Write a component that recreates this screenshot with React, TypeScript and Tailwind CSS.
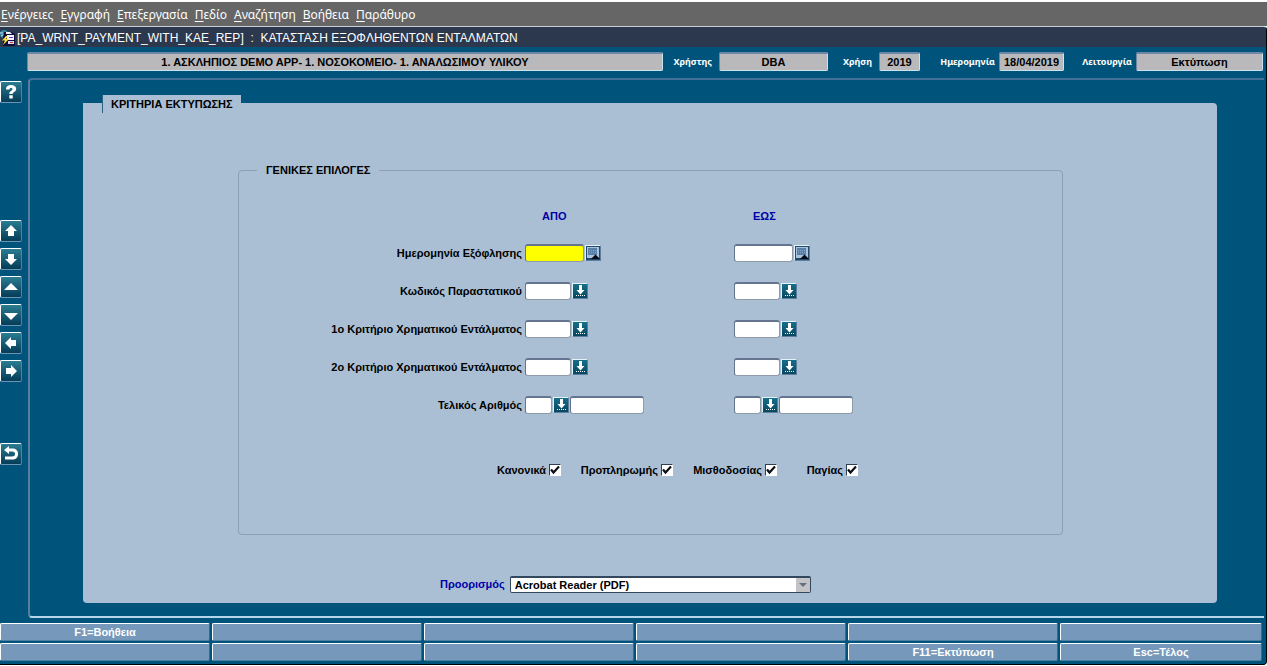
import { useState, type ReactNode } from "react";

const menus = ["Ενέργειες", "Εγγραφή", "Επεξεργασία", "Πεδίο", "Αναζήτηση", "Βοήθεια", "Παράθυρο"];

const functionKeys = [
  "F1=Βοήθεια", "", "", "", "", "",
  "", "", "", "", "F11=Εκτύπωση", "Esc=Τέλος",
];

const criteria = [
  { id: "date", label: "Ημερομηνία Εξόφλησης", kind: "date" },
  { id: "code", label: "Κωδικός Παραστατικού", kind: "code" },
  { id: "crit1", label: "1ο Κριτήριο Χρηματικού Εντάλματος", kind: "code" },
  { id: "crit2", label: "2ο Κριτήριο Χρηματικού Εντάλματος", kind: "code" },
  { id: "final", label: "Τελικός Αριθμός", kind: "number" },
];

const types = ["Κανονικά", "Προπληρωμής", "Μισθοδοσίας", "Παγίας"];

function AppIcon() {
  return (
    <svg width="16" height="16" viewBox="0 0 16 16" className="shrink-0">
      <circle cx="4" cy="4" r="4" fill="#2d87a3" />
      <path d="M0 3h3M1 6l4-2" stroke="#c5e6ef" />
      <path d="M4 2h7l4 2v12H3V7z" fill="#120f38" />
      <path d="M6 2h4l2 2H6z" fill="#f3f0ff" />
      <path d="M7 5h7v5H7z" fill="#f3f0ff" />
      <path d="M9 7.500h4" stroke="#5a45c8" />
      <path d="M8 11h6v3H8z" fill="#dcdcf5" />
      <path d="M10 12.500h3" stroke="#c2334a" />
      <path d="M6 6L2 10.500h3L3 15l6-6H6l2-3z" fill="#ffe23c" />
    </svg>
  );
}

function LovIcon() {
  return (
    <svg width="14" height="14" viewBox="0 0 14 14" className="shrink-0">
      <path d="M6 1h3v5h2.500l-4 4.500-4-4.500H6z" fill="#fff" />
      <path d="M3 11.500h9" stroke="#fff" strokeDasharray="1 1" />
    </svg>
  );
}

function CalendarIcon() {
  return (
    <svg width="14" height="14" viewBox="0 0 14 14" className="shrink-0">
      <rect width="14" height="14" fill="#234a6c" />
      <rect x="1" y="1" width="12" height="11" fill="#a9c4dc" />
      <rect x="2" y="2" width="9" height="7" fill="#587fa8" />
      <path d="M3 4.500h7M3 6.500h7" stroke="#86a6c8" strokeDasharray="1 1" />
      <path d="M5 13l4.500-4.500L14 13z" fill="#050a12" />
    </svg>
  );
}

function PickerButton({ label, children }: { label: string; children: ReactNode }) {
  return (
    <button
      type="button"
      aria-label={label}
      className="flex h-4 w-4 shrink-0 items-center justify-center border border-t-[#e4f3f8] border-l-[#e4f3f8] border-r-[#5d7f9f] border-b-[#5d7f9f] bg-linear-to-b from-[#176f8b] to-[#07465f]"
    >
      {children}
    </button>
  );
}

function FieldInput({ label, id, className }: { label: string; id?: string; className: string }) {
  return (
    <input
      id={id}
      aria-label={label}
      className={`h-[18px] shrink-0 rounded-[3px] border border-t-2 border-t-[#65758f] border-l-[#65758f] border-r-[#8d9bab] border-b-[#8d9bab] px-1 outline-none ${className}`}
    />
  );
}

function CriteriaField({ id, kind, label, required }: { id: string; kind: string; label: string; required?: boolean }) {
  if (kind === "date") {
    return (
      <div className="flex items-center gap-px">
        <FieldInput id={id} label={label} className={required ? "w-[59px] bg-[#ffff00]" : "w-[59px] bg-white"} />
        <PickerButton label={label}><CalendarIcon /></PickerButton>
      </div>
    );
  }
  if (kind === "code") {
    return (
      <div className="flex items-center gap-px">
        <FieldInput id={id} label={label} className="w-[46px] bg-white" />
        <PickerButton label={label}><LovIcon /></PickerButton>
      </div>
    );
  }
  return (
    <div className="flex items-center gap-px">
      <FieldInput id={id} label={label} className="w-[27px] bg-white" />
      <PickerButton label={label}><LovIcon /></PickerButton>
      <FieldInput label={label} className="w-[74px] bg-white" />
    </div>
  );
}

function ToolButton({ label, className = "", children }: { label: string; className?: string; children: ReactNode }) {
  return (
    <button
      type="button"
      aria-label={label}
      className={`flex h-[22px] w-[22px] shrink-0 items-center justify-center rounded-[2px] border border-t-white border-l-white border-r-[#4f83a6] border-b-[#6d93b5] bg-linear-to-b from-[#2a7d92] to-[#063c58] ${className}`}
    >
      <svg width="18" height="18" viewBox="0 0 18 18" fill="#fff">{children}</svg>
    </button>
  );
}

function HeaderField({ id, label, value, labelClass, fieldClass }: { id: string; label?: string; value: string; labelClass?: string; fieldClass: string }) {
  return (
    <>
      {label && (
        <label htmlFor={id} className={`shrink-0 text-right font-['Noto_Sans',sans-serif] text-[9px] font-bold text-white ${labelClass}`}>{label}</label>
      )}
      <input
        id={id}
        readOnly
        value={value}
        aria-label={label ?? "Μονάδα"}
        className={`h-[19px] rounded-[2px] border border-t-2 border-t-[#6f87a6] border-l-[#6f87a6] border-r-[#c9e2f0] border-b-[#c9e2f0] bg-[#b9b9bb] text-center text-[11px] font-bold text-black outline-none ${fieldClass}`}
      />
    </>
  );
}

function CheckField({ label }: { label: string }) {
  const [checked, setChecked] = useState(true);
  return (
    <label className="flex items-center justify-end gap-[3px]">
      {label}
      <span className="grid">
        <input
          type="checkbox"
          checked={checked}
          onChange={() => setChecked(!checked)}
          className="col-start-1 row-start-1 h-3 w-3 appearance-none border border-t-[#2e3f52] border-l-[#2e3f52] border-r-white border-b-white bg-white"
        />
        {checked && (
          <svg width="12" height="12" viewBox="0 0 12 12" className="pointer-events-none col-start-1 row-start-1">
            <path d="M2 5.500L4.500 8.500 10 2.500" fill="none" stroke="#0c1016" strokeWidth="2.200" />
          </svg>
        )}
      </span>
    </label>
  );
}

export default function App() {
  return (
    <div className="flex min-h-screen flex-col bg-white pt-[2px] pb-px font-['Liberation_Sans',Arial,sans-serif] text-[11px] text-black">
      <nav className="flex h-6 items-center gap-[7px] bg-[#666666] pt-[2px] pl-px font-['Noto_Sans',sans-serif] text-xs text-white">
        {menus.map((menu) => (
          <button key={menu} type="button">
            <span className="underline underline-offset-2">{menu[0]}</span>{menu.slice(1)}
          </button>
        ))}
      </nav>

      <div className="flex flex-1 flex-col rounded-tr-sm rounded-br-sm border-t border-r border-b border-t-[#c9d2da] border-r-black border-b-black bg-[#00547b]">
        <header className="flex h-5 items-center gap-px rounded-tr-sm bg-[#2c384d] pt-px text-xs text-white">
          <AppIcon />
          <h1 className="whitespace-pre">[PA_WRNT_PAYMENT_WITH_KAE_REP]  :  ΚΑΤΑΣΤΑΣΗ ΕΞΟΦΛΗΘΕΝΤΩΝ ΕΝΤΑΛΜΑΤΩΝ</h1>
        </header>

        <div className="flex h-[31px] items-center pr-[3px] pb-[2px] pl-[27px]">
          <HeaderField id="unit" value="1. ΑΣΚΛΗΠΙΟΣ DEMO APP- 1. ΝΟΣΟΚΟΜΕΙΟ- 1. ΑΝΑΛΩΣΙΜΟΥ ΥΛΙΚΟΥ" fieldClass="min-w-0 flex-1" />
          <HeaderField id="user" label="Χρήστης" value="DBA" labelClass="w-14 pr-[7px]" fieldClass="w-[109px]" />
          <HeaderField id="year" label="Χρήση" value="2019" labelClass="w-[51px] pr-[7px]" fieldClass="w-[41px]" />
          <HeaderField id="today" label="Ημερομηνία" value="18/04/2019" labelClass="w-[79px] pr-1" fieldClass="w-[65px]" />
          <HeaderField id="mode" label="Λειτουργία" value="Εκτύπωση" labelClass="w-[72px] pr-1" fieldClass="w-[127px]" />
        </div>

        <div className="flex flex-1">
          <aside className="flex w-7 shrink-0 flex-col gap-[6px] pt-[3px]">
            <ToolButton label="Βοήθεια" className="mb-[111px]">
              <path d="M4 6.500C4 3 6.500 2 9 2s5.200 1.200 5.200 4C14.200 9 10.700 8.800 10.700 11H7.300c0-3.300 3.200-3 3.200-4.700 0-1.600-3-1.600-3 .200zM7.300 12.200h3.400V15.500H7.300z" />
            </ToolButton>
            <ToolButton label="Προηγούμενη εγγραφή"><path d="M9 3l6 6h-3v5H6V9H3z" /></ToolButton>
            <ToolButton label="Επόμενη εγγραφή"><path d="M6 4h6v5h3l-6 6-6-6h3z" /></ToolButton>
            <ToolButton label="Προηγούμενη ομάδα"><path d="M9 5l7 7H2z" /></ToolButton>
            <ToolButton label="Επόμενη ομάδα"><path d="M2 7h14l-7 7z" /></ToolButton>
            <ToolButton label="Προηγούμενο πεδίο"><path d="M3 9l6-6v3h5v6H9v3z" /></ToolButton>
            <ToolButton label="Επόμενο πεδίο" className="mb-[55px]"><path d="M4 6h5V3l6 6-6 6v-3H4z" /></ToolButton>
            <ToolButton label="Επιστροφή">
              <path d="M2 5l5-4v2.500h3c4 0 6 2 6 5.500s-2 5.500-6 5.500H3v-3h7c2 0 3-.800 3-2.500s-1-2.500-3-2.500H7V9z" />
            </ToolButton>
          </aside>

          <main className="mr-[2px] flex flex-1 flex-col rounded-l-sm border-t-2 border-b-2 border-l-2 border-t-[#41709a] border-b-[#b5d5e8] border-l-[#57809f] pt-[23px] pr-[47px] pb-[13px] pl-[53px]">
            <section className="flex flex-1 flex-col rounded-sm rounded-tl-none bg-[#aabfd4] pb-[10px] font-bold">
              <h2 className="-mt-2 ml-[19px] flex h-[18px] items-center self-start border-l border-[#2d6486] bg-[#aabfd4] px-2">ΚΡΙΤΗΡΙΑ ΕΚΤΥΠΩΣΗΣ</h2>

              <fieldset className="mt-[49px] mr-[154px] mb-[41px] ml-[155px] flex-1 rounded-sm border border-[#8aa0b8]">
                <legend className="ml-[18px] px-[9px] leading-4">ΓΕΝΙΚΕΣ ΕΠΙΛΟΓΕΣ</legend>
                <div className="mt-7 grid grid-cols-[283px_206px_1fr] gap-x-[3px] text-[#0000a8]">
                  <span className="col-start-2 pl-[17px] leading-5">ΑΠΟ</span>
                  <span className="pl-[19px] leading-5">ΕΩΣ</span>
                </div>
                <div className="mt-2">
                  {criteria.map((row) => (
                    <div key={row.id} className="grid h-[38px] grid-cols-[283px_206px_1fr] items-center gap-x-[3px]">
                      <label htmlFor={`${row.id}-from`} className="text-right">{row.label}</label>
                      <CriteriaField id={`${row.id}-from`} kind={row.kind} label={`${row.label} ΑΠΟ`} required={row.kind === "date"} />
                      <CriteriaField id={`${row.id}-to`} kind={row.kind} label={`${row.label} ΕΩΣ`} />
                    </div>
                  ))}
                </div>
                <div className="mt-[38px] grid grid-cols-[322px_112px_104px_81px]">
                  {types.map((type) => (
                    <CheckField key={type} label={type} />
                  ))}
                </div>
              </fieldset>

              <div className="flex items-center pl-[357px]">
                <label htmlFor="destination" className="mr-[5px] text-[#0000a8]">Προορισμός</label>
                <div className="relative w-[301px]">
                  <select
                    id="destination"
                    className="block h-[17px] w-full appearance-none rounded-[2px] border border-t-2 border-[#33485f] bg-white pl-1 text-[11px] leading-[14px] font-bold outline-none"
                  >
                    <option>Acrobat Reader (PDF)</option>
                  </select>
                  <span className="pointer-events-none absolute top-[2px] right-px flex h-[14px] w-[14px] items-center justify-center bg-[#c4c4c8]">
                    <svg width="8" height="4" viewBox="0 0 8 4"><path d="M0 0h8L4 4z" fill="#66707c" /></svg>
                  </span>
                </div>
              </div>
            </section>
          </main>
        </div>

        <footer className="mt-[5px] mb-[3px] grid grid-cols-[repeat(5,210fr)_202fr] gap-[2px] pr-1">
          {functionKeys.map((key, index) => (
            <button
              key={index}
              type="button"
              aria-label={key || `Κενό πλήκτρο ${index + 1}`}
              className="h-[18px] rounded-[2px] border border-t-white border-l-white border-r-[#376b8f] border-b-[#4f7fa2] bg-[#7698ba] text-[11px] leading-4 font-bold text-white"
            >
              {key}
            </button>
          ))}
        </footer>
      </div>
    </div>
  );
}
